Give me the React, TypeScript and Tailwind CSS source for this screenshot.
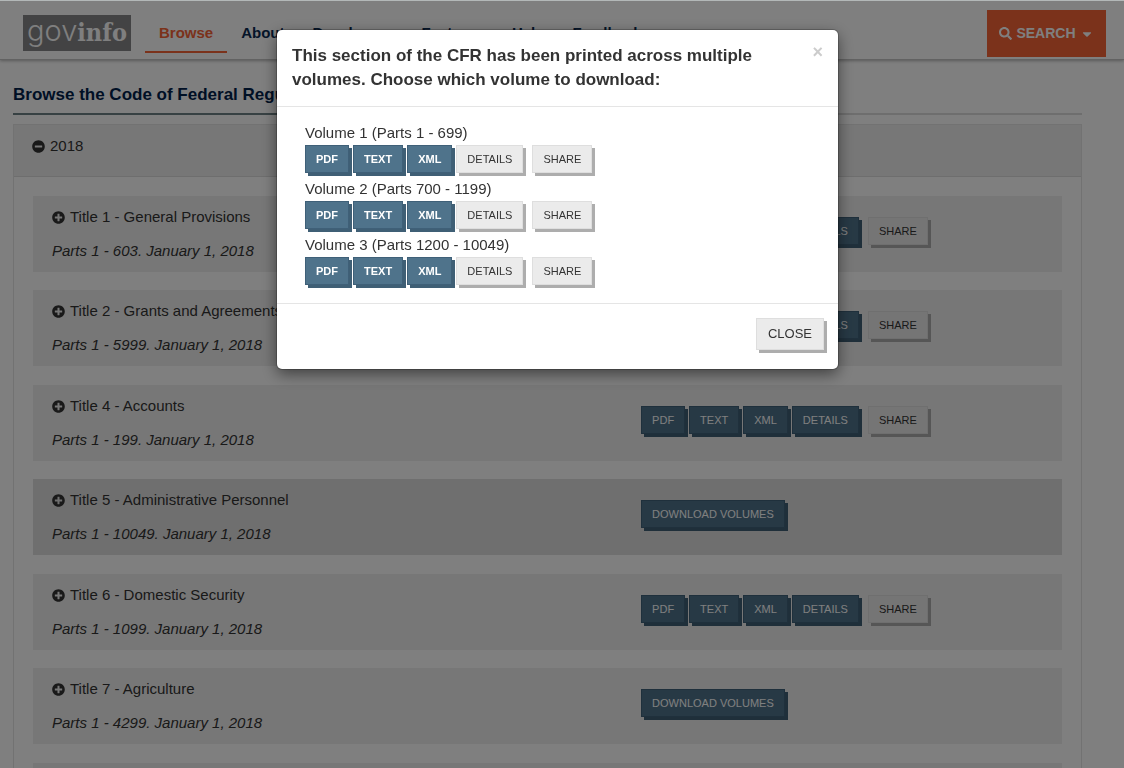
import React from "react";
import { FaCaretDown, FaMinusCircle, FaPlusCircle, FaSearch } from "react-icons/fa";

const NAV = ["About", "Developers", "Features", "Help", "Feedback"];

type Title = { name: string; parts: string; volumes?: boolean; hovered?: boolean };

const TITLES: Title[] = [
  { name: "Title 1 - General Provisions", parts: "Parts 1 - 603. January 1, 2018" },
  { name: "Title 2 - Grants and Agreements", parts: "Parts 1 - 5999. January 1, 2018" },
  { name: "Title 4 - Accounts", parts: "Parts 1 - 199. January 1, 2018" },
  { name: "Title 5 - Administrative Personnel", parts: "Parts 1 - 10049. January 1, 2018", volumes: true, hovered: true },
  { name: "Title 6 - Domestic Security", parts: "Parts 1 - 1099. January 1, 2018" },
  { name: "Title 7 - Agriculture", parts: "Parts 1 - 4299. January 1, 2018", volumes: true },
  { name: "Title 8 - Aliens and Nationality", parts: "Parts 1 - 1399. January 1, 2018" },
];

const VOLUMES = ["Volume 1 (Parts 1 - 699)", "Volume 2 (Parts 700 - 1199)", "Volume 3 (Parts 1200 - 10049)"];

function PrimaryLink({ children, bold = false }: { children: React.ReactNode; bold?: boolean }) {
  return (
    <a
      href="#"
      className={`flex h-7 items-center border border-[#3f6078] bg-[#4f738b] px-2.5 text-[11px] whitespace-nowrap text-white shadow-[3px_3px_0_#3f5f75] ${bold ? "font-bold" : ""}`}
    >
      {children}
    </a>
  );
}

function PlainButton({ children }: { children: React.ReactNode }) {
  return (
    <button
      type="button"
      className="flex h-7 items-center border border-[#dedede] bg-[#ebebeb] px-2.5 text-[11px] whitespace-nowrap text-[#333] shadow-[3px_3px_0_#adadad]"
    >
      {children}
    </button>
  );
}

function TitleRow({ title }: { title: Title }) {
  return (
    <li className={`flex h-19 odd:mb-[18px] even:mb-[19px] ${title.hovered ? "bg-[#dfdfdf]" : "bg-[#eee]"}`}>
      <div className="w-[59%] shrink-0 pt-[9px] pl-[19px]">
        <button type="button" className="flex items-center gap-[5px] leading-6">
          <FaPlusCircle className="size-[13px]" />
          {title.name}
        </button>
        <p className="mt-2.5 leading-6 italic">{title.parts}</p>
      </div>
      <div className="flex gap-1 pt-[21px] pl-px">
        {title.volumes ? (
          <PrimaryLink>DOWNLOAD VOLUMES</PrimaryLink>
        ) : (
          <>
            <PrimaryLink>PDF</PrimaryLink>
            <PrimaryLink>TEXT</PrimaryLink>
            <PrimaryLink>XML</PrimaryLink>
            <PrimaryLink>DETAILS</PrimaryLink>
            <div className="ml-[5px]">
              <PlainButton>SHARE</PlainButton>
            </div>
          </>
        )}
      </div>
    </li>
  );
}

function VolumeDialog() {
  return (
    <div className="fixed inset-0 border-t border-[#b3b8b8] bg-black/50 pr-[9px]">
      <div
        role="dialog"
        aria-modal="true"
        aria-labelledby="volume-title"
        className="mx-auto mt-[29px] w-[561px] max-w-full rounded-[5px] bg-white shadow-[0_5px_15px_rgba(0,0,0,0.5),0_0_0_1px_rgba(0,0,0,0.2)]"
      >
        <div className="flex items-start justify-between border-b border-[#e5e5e5] px-[15px] pt-3.5 pb-3.5">
          <h2 id="volume-title" className="w-[480px] text-[17px] leading-6 font-bold">
            This section of the CFR has been printed across multiple volumes. Choose which volume to download:
          </h2>
          <button type="button" aria-label="Close dialog" className="h-4 text-[18px] leading-4 font-bold text-[#ccc]">
            ×
          </button>
        </div>
        <ul className="border-b border-[#e5e5e5] px-7 pt-[15px] pb-[13px]">
          {VOLUMES.map((volume) => (
            <li key={volume} className="h-14">
              <p className="mb-px leading-[22px]">{volume}</p>
              <div className="flex gap-1">
                <PrimaryLink bold>PDF</PrimaryLink>
                <PrimaryLink bold>TEXT</PrimaryLink>
                <PrimaryLink bold>XML</PrimaryLink>
                <PlainButton>DETAILS</PlainButton>
                <div className="ml-[5px]">
                  <PlainButton>SHARE</PlainButton>
                </div>
              </div>
            </li>
          ))}
        </ul>
        <div className="flex justify-end px-3.5 pt-3.5 pb-[19px]">
          <button
            type="button"
            className="h-8 border border-[#dedede] bg-[#ebebeb] px-[11px] text-[13px] shadow-[3px_3px_0_#adadad]"
          >
            CLOSE
          </button>
        </div>
      </div>
    </div>
  );
}

export default function App() {
  return (
    <div className="h-screen overflow-hidden bg-white font-['Liberation_Sans',Arial,sans-serif] text-[15px] text-[#333]">
      <header className="flex h-[60px] items-start justify-between border-b border-[#c4c4c4] pr-[18px] pl-[23px] shadow-[0_1px_3px_rgba(0,0,0,0.3)]">
        <div className="flex">
          <a
            href="#"
            aria-label="govinfo home"
            className="mt-[15px] mr-3.5 flex h-9 w-[108px] items-baseline justify-center bg-[#868688] text-white"
          >
            <span className="font-['Inter',sans-serif] text-[29px] leading-8 font-light">gov</span>
            <span className="font-['DejaVu_Serif_Condensed','DejaVu_Serif',serif] text-[25px] leading-8 font-bold">
              info
            </span>
          </a>
          <nav className="flex pt-[15px] font-bold text-[#0a2a52]">
            <a href="#" className="h-[38px] border-b-2 border-[#f66436] px-3.5 leading-9 text-[#f66436]">
              Browse
            </a>
            {NAV.map((item) => (
              <a key={item} href="#" className="px-3.5 leading-9">
                {item}
              </a>
            ))}
          </nav>
        </div>
        <button
          type="button"
          className="mt-2.5 flex h-[47px] w-[119px] items-center justify-center gap-1 bg-[#f66436] text-[14px] font-bold text-white"
        >
          <FaSearch className="size-[13px]" />
          SEARCH
          <FaCaretDown className="size-3.5" />
        </button>
      </header>

      <main className="pr-[42px] pl-[13px]">
        <div className="mt-[22px] flex border-b-2 border-[#dcdcdc]">
          <h1 className="-mb-0.5 border-b-2 border-[#6f8387] pt-px pb-1.5 text-[17px] leading-6 font-bold text-[#00204a]">
            Browse the Code of Federal Regulations
          </h1>
        </div>
        <section className="mt-[9px] border border-[#e4e4e4]">
          <div className="border-b border-[#dcdcdc] bg-[#eee] pt-[9px] pb-[18px] pl-[18px]">
            <button type="button" className="flex items-center gap-[5px] leading-6">
              <FaMinusCircle className="size-[13px]" />
              2018
            </button>
          </div>
          <ul className="px-[19px] pt-[19px]">
            {TITLES.map((title) => (
              <TitleRow key={title.name} title={title} />
            ))}
          </ul>
        </section>
      </main>

      <VolumeDialog />
    </div>
  );
}
